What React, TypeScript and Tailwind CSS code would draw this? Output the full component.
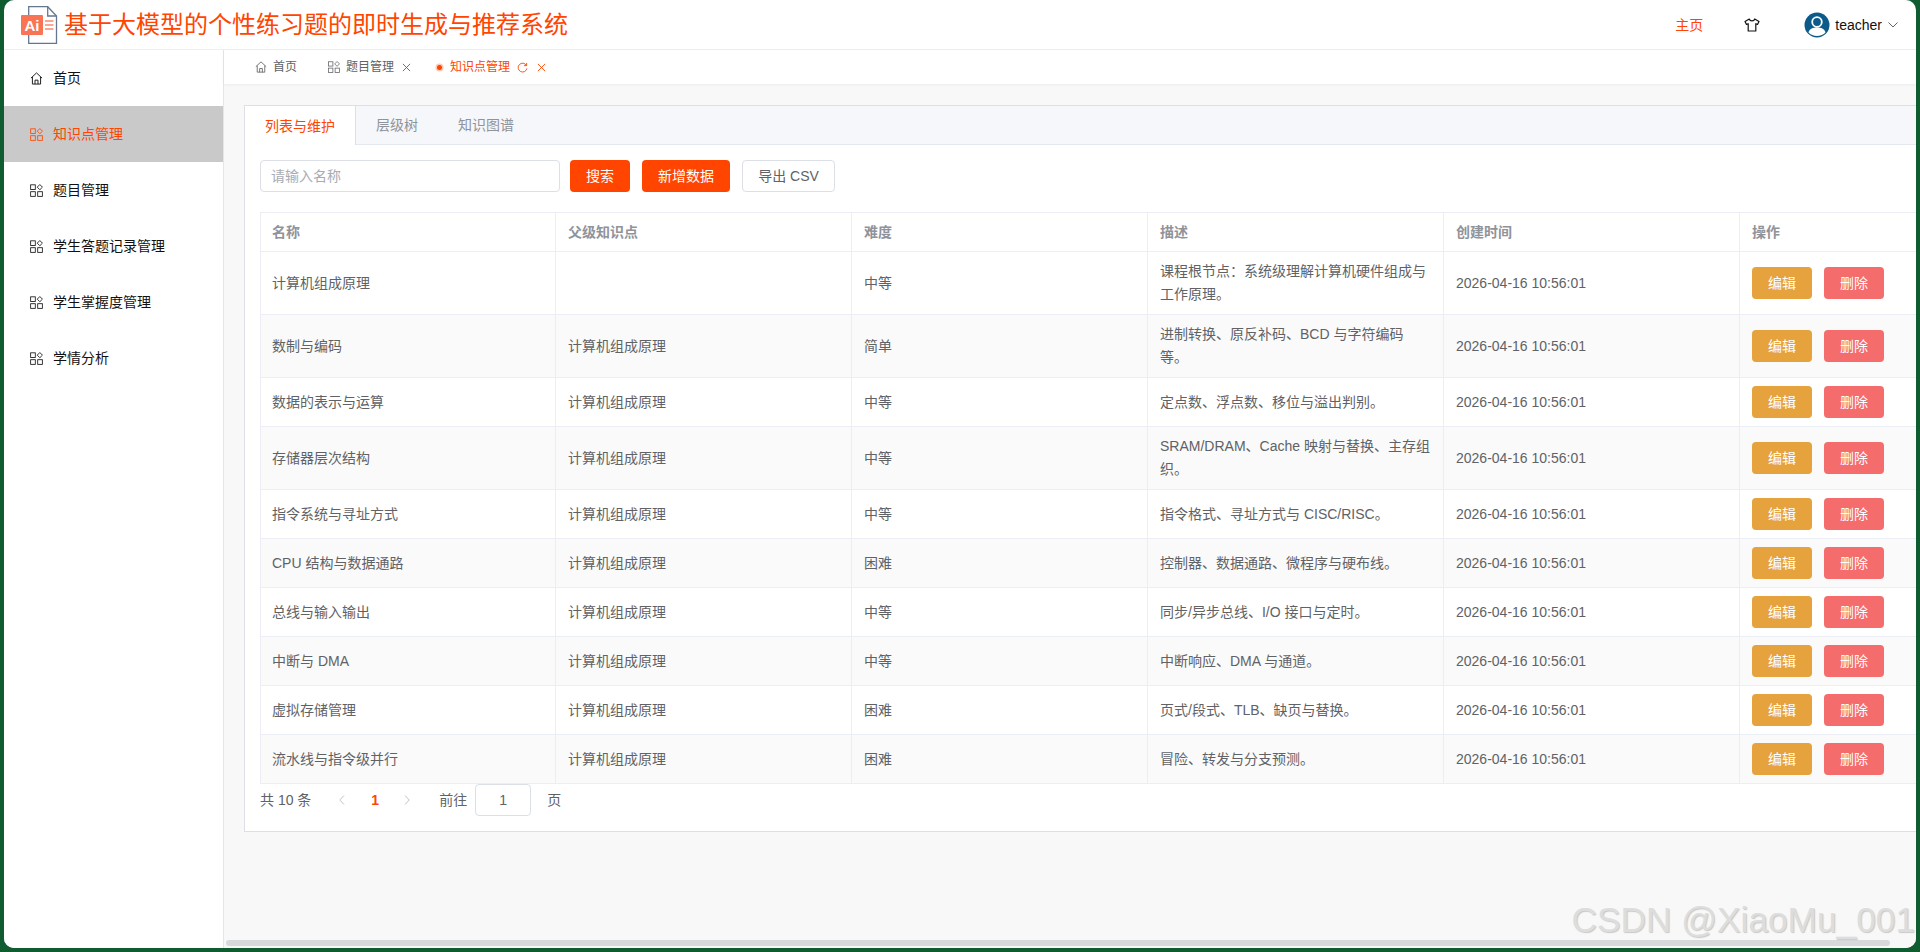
const font = { fontFamily: '"Liberation Sans", "Noto Sans CJK SC", sans-serif' };

const menus = ["首页", "知识点管理", "题目管理", "学生答题记录管理", "学生掌握度管理", "学情分析"];

const rows = [
  { name: "计算机组成原理", parent: "", level: "中等", desc: "课程根节点：系统级理解计算机硬件组成与工作原理。" },
  { name: "数制与编码", parent: "计算机组成原理", level: "简单", desc: "进制转换、原反补码、BCD 与字符编码等。" },
  { name: "数据的表示与运算", parent: "计算机组成原理", level: "中等", desc: "定点数、浮点数、移位与溢出判别。" },
  { name: "存储器层次结构", parent: "计算机组成原理", level: "中等", desc: "SRAM/DRAM、Cache 映射与替换、主存组织。" },
  { name: "指令系统与寻址方式", parent: "计算机组成原理", level: "中等", desc: "指令格式、寻址方式与 CISC/RISC。" },
  { name: "CPU 结构与数据通路", parent: "计算机组成原理", level: "困难", desc: "控制器、数据通路、微程序与硬布线。" },
  { name: "总线与输入输出", parent: "计算机组成原理", level: "中等", desc: "同步/异步总线、I/O 接口与定时。" },
  { name: "中断与 DMA", parent: "计算机组成原理", level: "中等", desc: "中断响应、DMA 与通道。" },
  { name: "虚拟存储管理", parent: "计算机组成原理", level: "困难", desc: "页式/段式、TLB、缺页与替换。" },
  { name: "流水线与指令级并行", parent: "计算机组成原理", level: "困难", desc: "冒险、转发与分支预测。" },
];

const HomeIcon = ({ className }: { className?: string }) => (
  <svg viewBox="0 0 14 14" fill="none" stroke="currentColor" strokeWidth="1" className={className}>
    <path d="M1 6.6 7 1l6 5.6" />
    <path d="M2.6 5.4v7.6h8.8V5.4" />
    <path d="M5.4 13V8.8h3.2V13" />
  </svg>
);

const GridIcon = ({ className }: { className?: string }) => (
  <svg viewBox="0 0 14 14" fill="none" stroke="currentColor" strokeWidth="0.9" className={className}>
    <rect x="0.7" y="0.9" width="5" height="5" />
    <path d="M10.6.6 13.4 3.400 10.600 6.200 7.800 3.400Z" />
    <rect x="0.7" y="8.300" width="5" height="5" />
    <rect x="8.300" y="8.300" width="5" height="5" />
  </svg>
);

const CloseIcon = ({ className }: { className?: string }) => (
  <svg viewBox="0 0 10 10" fill="none" stroke="currentColor" strokeWidth="1" className={className}>
    <path d="M1 1l8 8M9 1 1 9" />
  </svg>
);

const Logo = () => (
  <svg viewBox="0 0 40 40" className="ml-[17px] h-[40px] w-[40px] shrink-0">
    <path d="M7.700 1.700h19l8.800 9.300v27.300H7.700z" fill="#fff" stroke="#63788f" strokeWidth="1.300" />
    <path d="M26.700 1.700v9.300h8.800" fill="none" stroke="#63788f" strokeWidth="1.300" />
    <rect x="0" y="10" width="22" height="20" rx="1" fill="#f97355" />
    <text x="11" y="25.500" textAnchor="middle" fontSize="15" fontWeight="700" fill="#fff" fontFamily="Liberation Sans, sans-serif">Ai</text>
    <path d="M24 16h8.500M24 20h8.500M24 24h8.500" stroke="#f98c72" strokeWidth="1.300" />
  </svg>
);

const Button = ({ label, className }: { label: string; className: string }) => (
  <button className={`flex h-[32px] items-center justify-center rounded-[4px] text-sm ${className}`}>{label}</button>
);

export default function App() {
  return (
    <div className="h-[952px] w-full overflow-hidden bg-[#0e5c30] px-[4px] pb-[4px]" style={font}>
      <div className="relative flex h-[948px] flex-col overflow-hidden rounded-[10px] bg-white">
        {/* top bar */}
        <header className="flex h-[50px] shrink-0 items-center border-b border-[#eeeeee]">
          <Logo />
          <h1 className="ml-[3px] text-[24px] leading-[32px] font-normal whitespace-nowrap text-[#ff4500]">
            基于大模型的个性练习题的即时生成与推荐系统
          </h1>
          <div className="ml-auto flex items-center">
            <span className="text-sm text-[#ff4500]">主页</span>
            <svg viewBox="0 0 16 14" fill="none" stroke="#111" strokeWidth="1.200" strokeLinejoin="round" className="ml-[41px] h-[14px] w-[16px]">
              <path d="M5.300 1 1 3.400l1.500 3 1.700-.7V13h7.600V5.700l1.700.7 1.500-3L10.700 1C10 3.600 6 3.600 5.300 1Z" />
            </svg>
            <svg viewBox="0 0 26 26" className="ml-[44px] h-[26px] w-[26px]">
              <circle cx="13" cy="13" r="12.500" fill="#0b5a8a" />
              <circle cx="13" cy="10" r="4.800" fill="none" stroke="#fff" strokeWidth="1.800" />
              <path d="M4.500 20.500C5.500 16.500 9 15.500 13 15.500s7.500 1 8.500 5c-2 2-5 3.500-8.500 3.500s-6.500-1.500-8.500-3.500Z" fill="#fff" />
            </svg>
            <span className="ml-[5px] text-sm text-[#111]">teacher</span>
            <svg viewBox="0 0 10 6" fill="none" stroke="#666" strokeWidth="1" className="mr-[18px] ml-[6px] h-[6px] w-[10px]">
              <path d="M.5.500 5 5 9.500.500" />
            </svg>
          </div>
        </header>

        <div className="flex min-h-0 flex-1">
          {/* side menu */}
          <aside className="w-[220px] shrink-0 border-r border-[#e6e6e6] bg-white">
            {menus.map((m, i) => (
              <div
                key={m}
                className={`flex h-[56px] items-center gap-[10px] pl-[26px] text-sm ${i === 1 ? "bg-[#c9c9c9] text-[#ff4500]" : "text-[#111]"}`}
              >
                {i === 0 ? <HomeIcon className="h-[13px] w-[13px]" /> : <GridIcon className="h-[13px] w-[13px]" />}
                {m}
              </div>
            ))}
          </aside>

          <main className="flex min-w-0 flex-1 flex-col bg-[#f8f8f8]">
            {/* tag bar */}
            <div className="flex h-[34px] shrink-0 items-center bg-white text-xs text-[#606266] shadow-[0_1px_3px_rgba(0,0,0,0.05)]">
              <HomeIcon className="ml-[31px] h-[12px] w-[12px]" />
              <span className="ml-[6px]">首页</span>
              <GridIcon className="ml-[31px] h-[12px] w-[12px]" />
              <span className="ml-[6px]">题目管理</span>
              <CloseIcon className="ml-[8px] h-[9px] w-[9px]" />
              <span className="ml-[26px] h-[5px] w-[5px] rounded-full bg-[#ff4500] shadow-[0_0_0_1.500px_#ffc9b5]" />
              <span className="ml-[8px] text-[#ff4500]">知识点管理</span>
              <svg viewBox="0 0 12 12" fill="none" stroke="#ff4500" strokeWidth="1" className="ml-[7px] h-[11px] w-[11px]">
                <path d="M10.300 3.800A4.800 4.800 0 1 0 10.800 7" />
                <path d="M10.500 1v3h-3" />
              </svg>
              <CloseIcon className="ml-[9px] h-[9px] w-[9px] text-[#ff4500]" />
            </div>

            <div className="min-h-0 flex-1 overflow-hidden pt-[21px] pl-[20px]">
              <section className="w-[1808px] border border-[#dcdfe6] bg-white">
                {/* tabs */}
                <div className="flex h-[39px] bg-[#f5f7fa] text-sm text-[#909399]">
                  <div className="flex w-[111px] items-center justify-center border-r border-[#dcdfe6] bg-white text-[#ff4500]">列表与维护</div>
                  <div className="flex flex-1 items-center gap-[40px] border-b border-[#e4e7ed] pl-[20px]">
                    <span>层级树</span>
                    <span>知识图谱</span>
                  </div>
                </div>

                <div className="p-[15px]">
                  <div className="flex items-center">
                    <input
                      placeholder="请输入名称"
                      className="h-[32px] w-[300px] rounded-[4px] border border-[#dcdfe6] bg-white px-[10px] text-sm outline-none placeholder:text-[#a8abb2]"
                    />
                    <Button label="搜索" className="ml-[10px] w-[60px] bg-[#ff4500] text-white" />
                    <Button label="新增数据" className="ml-[12px] w-[88px] bg-[#ff4500] text-white" />
                    <Button label="导出 CSV" className="ml-[12px] w-[93px] border border-[#dcdfe6] bg-white text-[#606266]" />
                  </div>

                  <table className="mt-[20px] w-[1776px] table-fixed border-separate border-spacing-0 border-t border-l border-[#ebeef5] text-sm leading-[23px] text-[#606266]">
                    <colgroup>
                      <col className="w-[295px]" />
                      <col className="w-[296px]" />
                      <col className="w-[296px]" />
                      <col className="w-[296px]" />
                      <col className="w-[296px]" />
                      <col className="w-[296px]" />
                    </colgroup>
                    <thead>
                      <tr>
                        {["名称", "父级知识点", "难度", "描述", "创建时间", "操作"].map((h, i) => (
                          <th
                            key={h}
                            className={`border-r border-b border-[#ebeef5] pt-2 pr-3 pb-[7px] text-left font-bold text-[#909399] ${i === 0 ? "pl-[11px]" : "pl-3"}`}
                          >
                            {h}
                          </th>
                        ))}
                      </tr>
                    </thead>
                    <tbody>
                      {rows.map((r, i) => (
                        <tr key={r.name} className={i % 2 === 1 ? "bg-[#fafafa]" : "bg-white"}>
                          <td className="border-r border-b border-[#ebeef5] py-2 pr-3 pl-[11px]">{r.name}</td>
                          <td className="border-r border-b border-[#ebeef5] px-3 py-2">{r.parent}</td>
                          <td className="border-r border-b border-[#ebeef5] px-3 py-2">{r.level}</td>
                          <td className="border-r border-b border-[#ebeef5] px-3 py-2">{r.desc}</td>
                          <td className="border-r border-b border-[#ebeef5] px-3 py-2">2026-04-16 10:56:01</td>
                          <td className="border-r border-b border-[#ebeef5] px-3 py-2">
                            <div className="flex gap-[12px]">
                              <Button label="编辑" className="w-[60px] bg-[#e6a23c] text-white" />
                              <Button label="删除" className="w-[60px] bg-[#f56c6c] text-white" />
                            </div>
                          </td>
                        </tr>
                      ))}
                    </tbody>
                  </table>

                  {/* pagination */}
                  <div className="flex h-[32px] items-center text-sm text-[#606266]">
                    <span>共 10 条</span>
                    <svg viewBox="0 0 6 10" fill="none" stroke="#c0c4cc" strokeWidth="1" className="ml-[28px] h-[10px] w-[6px]">
                      <path d="M5 .5.800 5 5 9.500" />
                    </svg>
                    <span className="ml-[26px] font-bold text-[#ff4500]">1</span>
                    <svg viewBox="0 0 6 10" fill="none" stroke="#c0c4cc" strokeWidth="1" className="ml-[25px] h-[10px] w-[6px]">
                      <path d="M1 .5 5.200 5 1 9.500" />
                    </svg>
                    <span className="ml-[29px]">前往</span>
                    <input
                      defaultValue="1"
                      className="ml-[8px] h-[32px] w-[56px] rounded-[4px] border border-[#dcdfe6] bg-white text-center text-sm outline-none"
                    />
                    <span className="ml-[16px]">页</span>
                  </div>
                </div>
              </section>
            </div>

            {/* horizontal scrollbar */}
            <div className="h-[8px] shrink-0 pr-[26px] pl-[2px]">
              <div className="h-[6px] rounded-[3px] bg-[#d8d9db]" />
            </div>
          </main>
        </div>

        <span className="absolute right-[1px] bottom-[8px] text-[35.250px] leading-[40px] whitespace-nowrap text-[#dddddd] [text-shadow:1px_1px_1px_rgba(90,90,90,0.3)]">
          CSDN @XiaoMu_001
        </span>
      </div>
    </div>
  );
}
